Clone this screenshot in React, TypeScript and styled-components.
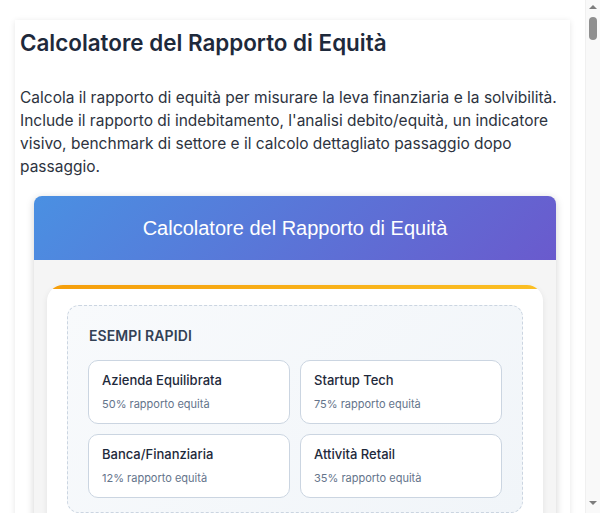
import styled, { createGlobalStyle } from 'styled-components';

const GlobalStyle = createGlobalStyle`
  html, body {
    margin: 0;
    padding: 0;
    background: #ffffff;
  }
  body {
    font-family: Inter, "Noto Sans", sans-serif;
    color: #1f2937;
  }
  * { box-sizing: border-box; }
`;

interface Example {
  title : string,
  ratio : number
}

const examples : Example[] = [
  { title: 'Azienda Equilibrata', ratio: 50 },
  { title: 'Startup Tech', ratio: 75 },
  { title: 'Banca/Finanziaria', ratio: 12 },
  { title: 'Attività Retail', ratio: 35 },
];

const fields = [
  'Totale Patrimonio Netto (€)',
  'Totale Attività (€)',
  'Totale Passività (€)',
];

export default function App() {
  return (
    <>
      <GlobalStyle />
      <Page>
        <Card>
          <Title>Calcolatore del Rapporto di Equità</Title>
          <Intro>
            Calcola il rapporto di equità per misurare la leva finanziaria e la solvibilità.
            Include il rapporto di indebitamento, l'analisi debito/equità, un indicatore
            visivo, benchmark di settore e il calcolo dettagliato passaggio dopo passaggio.
          </Intro>
          <Widget>
            <WidgetHeader>Calcolatore del Rapporto di Equità</WidgetHeader>
            <WidgetBody>
              <Panel>
                <Examples>
                  <ExamplesTitle>Esempi Rapidi</ExamplesTitle>
                  <ExampleGrid>
                    {examples.map(e => (
                      <ExampleButton key={e.title} type="button">
                        <ExampleName>{e.title}</ExampleName>
                        <ExampleMeta>{e.ratio}% rapporto equità</ExampleMeta>
                      </ExampleButton>
                    ))}
                  </ExampleGrid>
                </Examples>
                <Form>
                  {fields.map(f => (
                    <Field key={f}>
                      <FieldLabel>{f}</FieldLabel>
                      <Input placeholder="0" />
                    </Field>
                  ))}
                  <Submit type="button">Calcola Rapporto</Submit>
                </Form>
              </Panel>
            </WidgetBody>
          </Widget>
        </Card>
      </Page>
      <Scrollbar aria-hidden>
        <Arrow $dir="up" />
        <Thumb />
        <Arrow $dir="down" />
      </Scrollbar>
    </>
  );
}

const Page = styled.div`
  width: 585px;
  padding: 20px 15px 40px;
`;

const Card = styled.div`
  background: #ffffff;
  box-shadow: 0 1px 6px rgba(0, 0, 0, 0.1);
  padding: 8px 5px 30px;
`;

const Title = styled.h1`
  margin: 0;
  font-size: 22.4px;
  font-weight: 600;
  line-height: 30px;
  color: #1e293b;
`;

const Intro = styled.p`
  margin: 28px 0 0;
  font-size: 15.5px;
  line-height: 23px;
  color: #2d3340;
`;

const Widget = styled.div`
  margin: 18px 9px 0 14px;
  border-radius: 8px;
  overflow: hidden;
  box-shadow: 0 2px 8px rgba(0, 0, 0, 0.18);
  background: #f5f5f5;
`;

const WidgetHeader = styled.div`
  height: 64px;
  display: flex;
  align-items: center;
  justify-content: center;
  background: linear-gradient(135deg, #4a90e2 0%, #6a5acd 100%);
  color: #ffffff;
  font-family: "Liberation Sans", Arial, sans-serif;
  font-size: 20px;
`;

const WidgetBody = styled.div`
  padding: 25px 13px;
`;

const Panel = styled.div`
  position: relative;
  background: #ffffff;
  border-radius: 16px;
  padding: 20px 20px 24px;
  box-shadow: 0 2px 6px rgba(0, 0, 0, 0.08);
  overflow: hidden;

  &::before {
    content: '';
    position: absolute;
    top: 0;
    left: 0;
    right: 0;
    height: 4px;
    background: linear-gradient(90deg, #f59e0b, #fbbf24);
  }
`;

const Examples = styled.div`
  border: 1px dashed #cbd5e1;
  border-radius: 12px;
  padding: 20px 20px 14px;
  background: linear-gradient(135deg, #f8fafc 0%, #f1f5f9 100%);
`;

const ExamplesTitle = styled.div`
  font-size: 14px;
  font-weight: 600;
  text-transform: uppercase;
  letter-spacing: 0.1px;
  color: #334155;
  line-height: 20px;
  margin: 0 0 14px 1px;
`;

const ExampleGrid = styled.div`
  display: grid;
  grid-template-columns: 1fr 1fr;
  gap: 10px;
`;

const ExampleButton = styled.button`
  height: 64px;
  text-align: left;
  background: #ffffff;
  border: 1px solid #cbd5e1;
  border-radius: 10px;
  padding: 10px 13px;
  font-family: inherit;
  cursor: pointer;
  display: flex;
  flex-direction: column;
  gap: 8px;
`;

const ExampleName = styled.span`
  font-size: 13px;
  font-weight: 500;
  color: #1e293b;
  line-height: 18px;
`;

const ExampleMeta = styled.span`
  font-size: 11px;
  color: #64748b;
  line-height: 15px;
`;

const Form = styled.div`
  margin-top: 24px;
  display: flex;
  flex-direction: column;
  gap: 16px;
`;

const Field = styled.label`
  display: flex;
  flex-direction: column;
  gap: 6px;
`;

const FieldLabel = styled.span`
  font-size: 13px;
  font-weight: 600;
  color: #334155;
`;

const Input = styled.input`
  height: 40px;
  border: 1px solid #cbd5e1;
  border-radius: 8px;
  padding: 0 12px;
  font-family: inherit;
  font-size: 14px;
`;

const Submit = styled.button`
  height: 44px;
  border: none;
  border-radius: 8px;
  background: linear-gradient(135deg, #4a90e2 0%, #6a5acd 100%);
  color: #ffffff;
  font-family: inherit;
  font-size: 15px;
  font-weight: 600;
`;

/* stand-in for the browser's classic scrollbar seen in the screenshot */
const Scrollbar = styled.div`
  position: fixed;
  top: 0;
  right: 0;
  bottom: 0;
  width: 15px;
  background: #f9f9f9;
  border-left: 1px solid #f0f0f0;
  display: flex;
  flex-direction: column;
  align-items: center;
`;

const Arrow = styled.div<{$dir : 'up' | 'down'}>`
  width: 0;
  height: 0;
  margin: ${p => (p.$dir === 'up' ? '5px 0 0' : 'auto 0 8px')};
  border-left: 4px solid transparent;
  border-right: 4px solid transparent;
  ${p => (p.$dir === 'up'
    ? 'border-bottom: 4px solid #7d7d7d;'
    : 'border-top: 4px solid #7d7d7d;')}
`;

const Thumb = styled.div`
  width: 8px;
  height: 23px;
  margin-top: 8px;
  border-radius: 4px;
  background: #8f8f8f;
`;
